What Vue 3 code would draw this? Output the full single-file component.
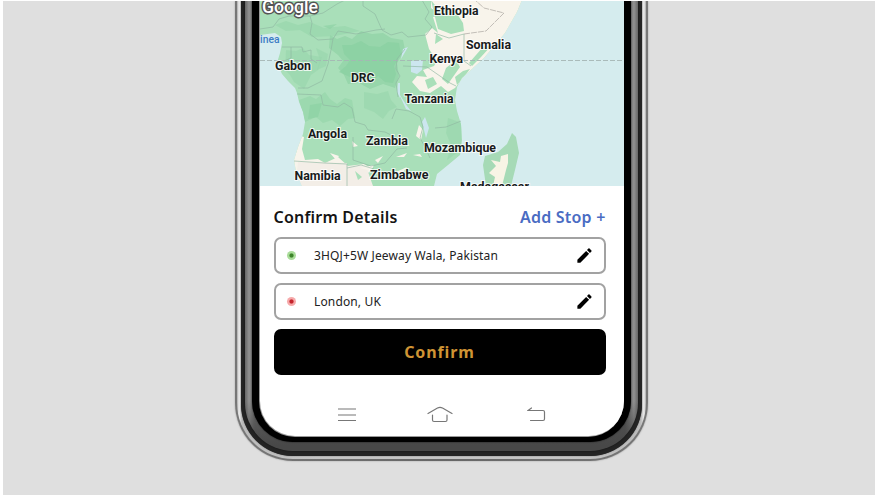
<script setup>
const labels = [
  { t: 'Ethiopia', x: 434, y: 15, w: 44.5 },
  { t: 'Somalia', x: 466, y: 49, w: 45 },
  { t: 'Kenya', x: 429.5, y: 62.5, w: 33.5 },
  { t: 'Gabon', x: 275, y: 69.5, w: 36 },
  { t: 'DRC', x: 351, y: 82, w: 23.5 },
  { t: 'Tanzania', x: 404.5, y: 103, w: 49 },
  { t: 'Angola', x: 308, y: 138, w: 39 },
  { t: 'Zambia', x: 366, y: 144.5, w: 42 },
  { t: 'Mozambique', x: 424, y: 151.5, w: 72 },
  { t: 'Zimbabwe', x: 370, y: 178.5, w: 58.5 },
  { t: 'Namibia', x: 294.5, y: 180, w: 46 },
  { t: 'Madagascar', x: 460, y: 190.5, w: 69 },
]
const stops = [
  { kind: 'from', text: '3HQJ+5W Jeeway Wala, Pakistan' },
  { kind: 'to', text: 'London, UK' },
]
</script>

<template>
  <div class="stage">
    <div class="edge"><div class="steel"><div class="groove"><div class="band"><div class="bezel"><div class="lip">
      <main class="screen">
        <svg class="map" viewBox="260 1 364 184.5" width="364" height="184.5">
          <defs>
            <clipPath id="land"><path d="M260 0H522L517 12L505 33L495 45L484 58L472 69L462 78L457 87L455 100L457 111L461 124L462 140L460 155L448 165L437 174L434 186H302L296 172L294 160L298 147L303 134L305 122L303 112L299 102L297 93L295 88L288 81L282 74L277 63L280 53L282 43L281 37L275 33L260 35Z" /></clipPath>
            <filter id="soft" x="-5%" y="-5%" width="110%" height="110%"><feGaussianBlur stdDeviation=".5" /></filter>
          </defs>
          <rect x="260" width="364" height="186" fill="#d5ecee" />
          <g filter="url(#soft)">
            <g clip-path="url(#land)">
              <rect x="255" width="290" height="190" fill="#a9dfb9" />
              <g fill="#97d6ab">
                <path d="M330 35L337 39L345 36L352 39L361 31L372 34L383 33L391 38L403 40L405 50L397 63L399 76L395 88L383 84L370 89L359 83L348 84L344 75L338 68L343 61L338 55L329 48Z" />
                <path d="M299 100L310 96L316 99L325 92L330 99L337 104L345 98L352 100L355 118L348 119L340 126L332 120L323 123L316 117L305 122Z" opacity=".7" />
                <path d="M286 50L296 51L303 48L309 55L322 57L318 70L311 75L304 89L294 82L290 75L285 70Z" opacity=".6" />
                <path d="M275 25L286 21L298 25L310 22L324 28L345 26L360 31L335 36L312 37L300 30L286 31Z" opacity=".65" />
                <path d="M316 48L328 54L326 66L317 70L320 60Z M364 92L377 94L388 91L391 100L397 107L389 111L383 119L374 112L364 108Z M448 118L462 123L461 150L447 160L451 145L446 133Z" opacity=".6" />
              </g>
              <g fill="#8ad0a1">
                <path d="M342 45L352 45L361 41L369 46L380 47L388 42L399 43L401 54L394 66L396 74L393 83L385 82L378 76L372 82L364 80L358 76L350 77L339 72L346 66L350 60L344 54Z" opacity=".75" />
                <path d="M310 105L322 103L318 117L308 119Z M323 26L337 24L330 29Z" opacity=".6" />
              </g>
              <path d="M431 0H530V30L480 66L463 78L455 88L448 92L441 86L430 93L420 91L412 82L417 76L427 77L423 70L434 66L437 61L429 49L425 34L432 28L438 33L433 17L440 15L431 8Z" fill="#f8f4eb" />
              <g fill="#a9dfb9"><path d="M431 0L438 9L454 9L463 23L464 31L451 34L438 29L435 17ZM446 68L456 60L460 67L448 84L442 79ZM483 47L492 45L481 57L472 66L469 63L476 55ZM470 69L464 77L457 85L455 77L463 71ZM425 80L433 77L437 84L428 89ZM436 34L443 39L435 44Z" /></g>
              <path d="M298 135L304 137L302 149L305 160L318 159L325 163L338 157L348 166L364 164L372 169L365 176L370 186H290V145Z" fill="#f8f4eb" />
              <path d="M298 162L347 163L348 190H295ZM347 166H366L373 186H347Z" fill="#f3eee7" />
              <g fill="#f8f4eb"><path d="M352 141L358 146L353 147ZM375 160L383 156L378 163ZM419 125L423 130L421 140L416 136ZM396 157L407 153L404 157ZM330 153L339 156L336 160ZM396 172L407 167L401 175ZM360 168L374 165L371 171ZM413 155L420 154L422 157Z" /></g>
              <path d="M355 171L362 177L358 180Z" fill="#a9dfb9" />
              <path d="M411 61L423 60L422 70L417 74L411 72ZM398 83L400 83L400 98L397 92ZM403 49L408 47L401 59ZM425 117L429 128L426 138L422 122ZM398 92L407 106L411 111L406 109Z" fill="#cce6ef" />
            </g>
            <path d="M260 29L273 27L279 19L289 16L310 16L323 13L337 4L345 0M363 0V6L375 14L382 30L391 35L402 32L408 37L426 35L432 27L425 19L429 12L422 0M310 16L312 23L310 34L318 40L333 39L338 31L356 34L376 30L385 29M282 47H302L303 52L311 50V59L317 63M333 39L331 50L328 64L322 81L308 88L298 88M291 47V58L284 61M297 94L321 95L323 105L338 107L344 103L352 108L355 122L365 125L368 130L385 132L397 138M353 137V160L371 166L385 163L397 149L407 148M294 161L324 163L347 164L347 186M347 168L361 165L374 169M392 119L396 109L409 111L420 117L423 127L420 138L425 147L430 158M435 128L446 127L461 121M405 49L397 59L396 69L400 76L396 83L398 97M403 66L427 67L450 83L456 86M434 33L449 38L464 34L464 61L471 66" fill="none" stroke="#8eb6a0" stroke-width=".65" />
            <path d="M464 34L486 31L504 13L484 8L475 0" fill="none" stroke="#aaa6a0" stroke-width=".7" stroke-dasharray="6 1" />
            <path d="M260 60.5H624" fill="none" stroke="#a5b6b3" stroke-width=".9" stroke-dasharray="5 2" />
            <path d="M512 133L516 137L519 153L515 170L511 186H486L483 165L485 156L498 152L507 144Z" fill="#a6dab6" />
            <path d="M508 154L501 156L500 162L491 160L496 166L489 173L495 177L493 186H502L506 170L508 163Z" fill="#f8f4e5" />
          </g>
          <text x="262" y="12.5" textLength="56" lengthAdjust="spacingAndGlyphs" class="brand">Google</text>
          <text x="260" y="43" textLength="19.5" lengthAdjust="spacingAndGlyphs" class="sea">inea</text>
          <text v-for="l in labels" :key="l.t" :x="l.x" :y="l.y" :textLength="l.w" lengthAdjust="spacingAndGlyphs" class="label">{{ l.t }}</text>
        </svg>

        <section class="details">
          <header class="head"><h1>Confirm Details</h1><a class="add">Add Stop +</a></header>
          <div v-for="s in stops" :key="s.kind" class="stop">
            <span class="dot" :class="s.kind"></span>
            <span class="place">{{ s.text }}</span>
            <svg class="pen" viewBox="0 0 24 24" width="19" height="19"><path d="M3 17.25V21h3.75L17.81 9.94l-3.75-3.75L3 17.25zM20.71 7.04a1 1 0 0 0 0-1.41l-2.34-2.34a1 1 0 0 0-1.41 0l-1.83 1.83 3.75 3.75 1.83-1.83z" /></svg>
          </div>
          <button class="confirm">Confirm</button>
        </section>

        <nav class="keys">
          <svg width="18" height="16" viewBox="0 0 18 16"><path d="M.5 2H17.5M.5 8H17.5M.5 13.5H17.5" /></svg>
          <svg class="home" width="26" height="18" viewBox="0 0 26 18"><path d="M1 7.5L10.5 2Q13 .6 15.5 2L25 7.5M5.5 9V14Q5.5 15.5 7 15.5H18.5Q20 15.5 20 14V9" /></svg>
          <svg width="19" height="16" viewBox="0 0 19 16"><path d="M4.5 1L1 3.5H16Q17.5 3.5 17.5 5V12Q17.5 13.5 16 13.5H3.5" /></svg>
        </nav>
      </main>
    </div></div></div></div></div></div>
  </div>
</template>

<style>
body { background: #fff; overflow: hidden; }
</style>
<style scoped>
* { box-sizing: border-box; }
.stage { width: 872px; height: 494px; margin: 1px 0 0 3px; padding-left: 232px; background: #dfdfdf; overflow: hidden; font-family: "Noto Sans", sans-serif; }
.edge { width: 413px; height: 460px; padding: 0 2px 2px; background: linear-gradient(90deg, #777, #666 50%, #777); border-radius: 0 0 58px 58px; box-shadow: 0 0 1.5px #888; }
.steel { padding: 0 4px 3.5px 4px; background: linear-gradient(90deg, #aaa, #eee 2px, #bbb 5px, #c4c4c4 80px, #c4c4c4 330px, #bbb 404px, #eee 407px, #aaa); border-radius: 0 0 56px 56px; }
.groove { padding: 0 4px 4.5px; background: #242424; border-radius: 0 0 52px 52px; box-shadow: 0 0 1px #222; }
.band { padding: 0 7px 9px; background: linear-gradient(#0000 400px, #484848 444px), linear-gradient(90deg, #666, #919191 4px, #666 10px, #555 380px, #6a6a6a 383px, #919191 389px, #666); border-radius: 0 0 48px 48px; box-shadow: 0 0 2px #111; }
.bezel { padding: 0 7px 5px; background: #000; border-radius: 0 0 41px 41px; box-shadow: 0 0 1.5px #000; }
.lip { padding: 0 0 1px 1px; background: #999; border-radius: 0 0 36px 36px; }
.screen { height: 435px; display: flex; flex-direction: column; overflow: hidden; background: #fff; border-radius: 0 0 35px 35px; }
.map { display: block; flex: none; }
.label { font: 700 12px Roboto, sans-serif; fill: #191b1c; stroke: #fff; stroke-width: 2px; stroke-opacity: .8; paint-order: stroke; }
.brand { font: 500 18px Roboto, sans-serif; fill: #fff; stroke: #555; stroke-width: 3px; stroke-linejoin: round; paint-order: stroke; }
.sea { font: 500 10px Roboto, sans-serif; fill: #3c7cc5; }
.details { display: flex; flex-direction: column; gap: 9px; padding: 20px 18.5px 0 13.5px; }
.head { display: flex; justify-content: space-between; height: 22px; line-height: 22px; }
h1, .add { margin: 0; font-size: 16px; font-weight: 600; letter-spacing: .2px; white-space: nowrap; color: #141414; }
.stop { display: flex; align-items: center; height: 37px; padding: 0 10px 0 11px; border: 2px solid #a2a2a2; border-radius: 7px; }
.add { color: #4a6cc3; }
.dot { width: 9px; height: 9px; border-radius: 50%; }
.from { background: radial-gradient(circle, #3c8529 0 1.6px, #a9dc99 2.6px); }
.to { background: radial-gradient(circle, #c4242c 0 1.6px, #f6a9aa 2.6px); }
.place { margin-left: 18.5px; font-size: 12px; letter-spacing: .14px; color: #222; white-space: nowrap; }
.pen { margin-left: auto; }
.confirm { height: 46px; border: 0; border-radius: 7px; padding: 0; background: #000; color: #cf9434; font: 700 16px "Noto Sans", sans-serif; letter-spacing: .9px; }
.keys { display: flex; justify-content: space-between; align-items: center; width: 208px; height: 20px; margin: 30.5px 0 0 78px; }
.home { margin-right: 4px; }
.keys path { fill: none; stroke: #777; stroke-width: 1.2; stroke-linecap: round; }
</style>
